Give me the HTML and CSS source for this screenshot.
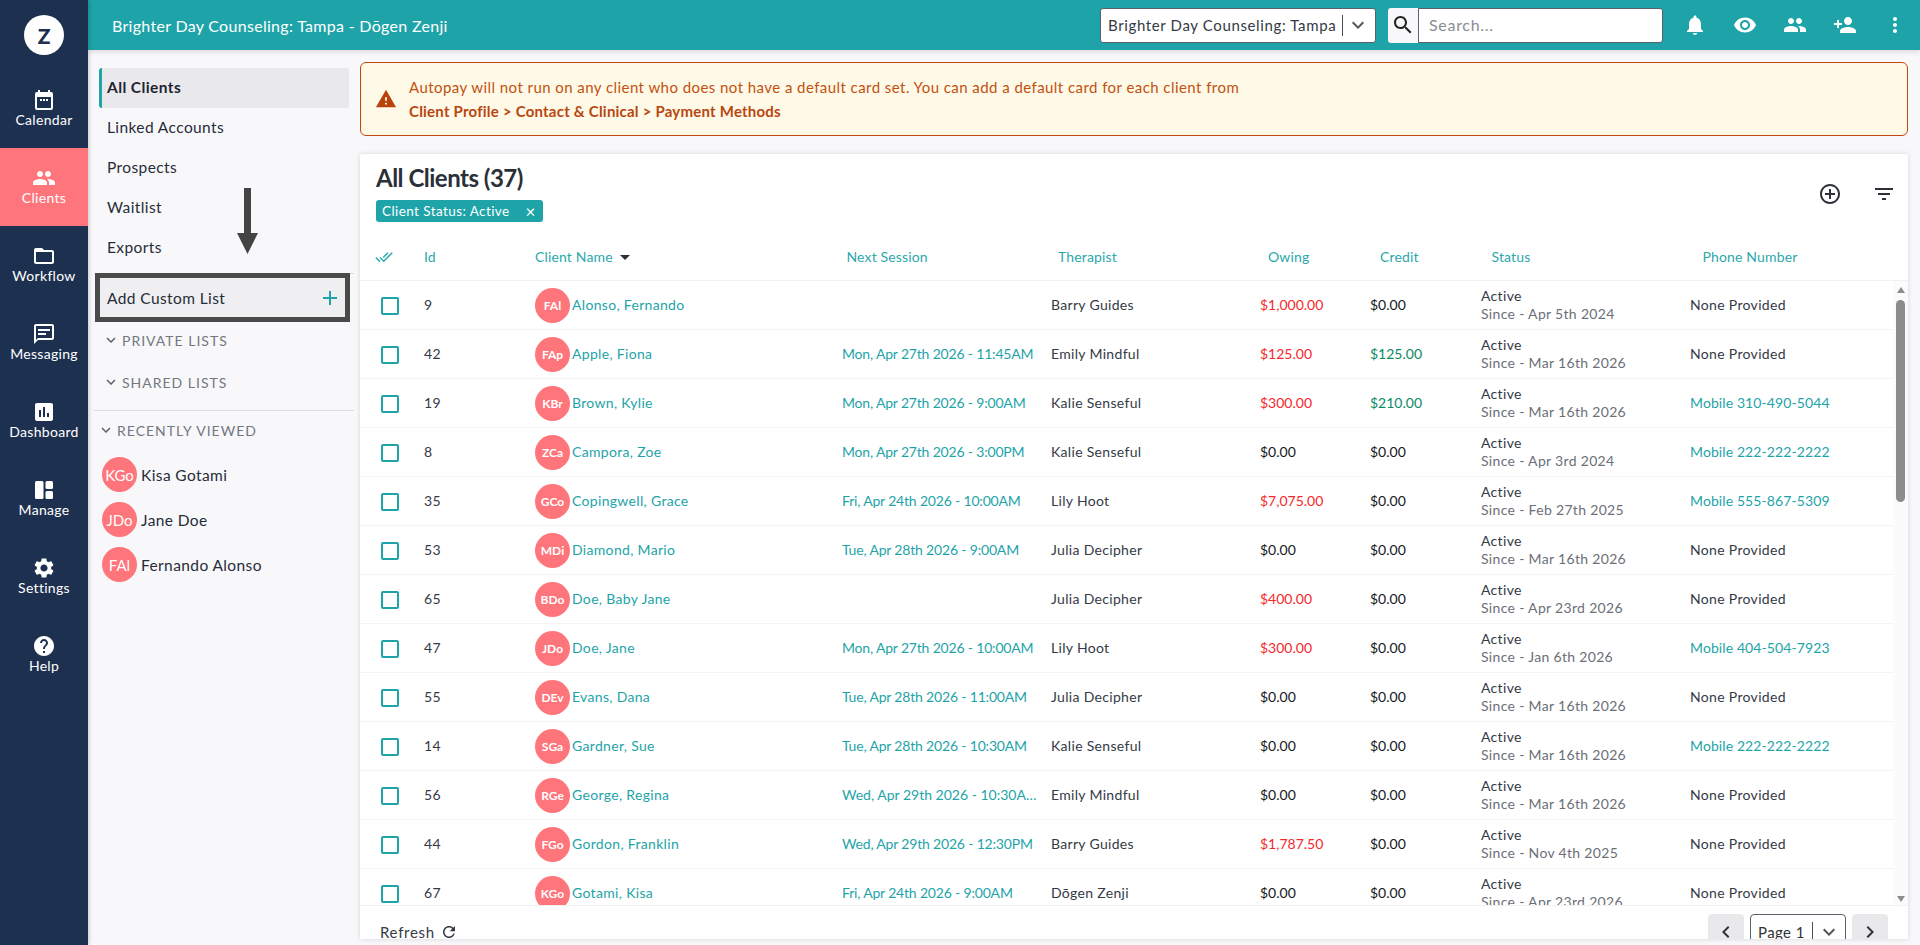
FILE: index.html
```html
<!DOCTYPE html>
<html lang="en">
<head>
<meta charset="utf-8">
<title>All Clients</title>
<link rel="stylesheet" href="styles.css">
</head>
<body>
<svg class="defs" aria-hidden="true">
  <symbol id="i-cal" viewBox="0 0 24 24"><path d="M19 4h-1V2h-2v2H8V2H6v2H5a2 2 0 0 0-2 2v14a2 2 0 0 0 2 2h14a2 2 0 0 0 2-2V6a2 2 0 0 0-2-2zm0 16H5V9h14v11z"/><path d="M8 11h2v2H8zM11 11h2v2h-2zM14 11h2v2h-2z"/></symbol>
  <symbol id="i-people" viewBox="0 0 24 24"><path d="M16 11c1.66 0 2.99-1.34 2.99-3S17.66 5 16 5c-1.66 0-3 1.34-3 3s1.34 3 3 3zm-8 0c1.66 0 2.99-1.34 2.99-3S9.66 5 8 5C6.34 5 5 6.34 5 8s1.34 3 3 3zm0 2c-2.33 0-7 1.17-7 3.5V19h14v-2.5c0-2.33-4.67-3.5-7-3.5zm8 0c-.29 0-.62.02-.97.05 1.16.84 1.97 1.97 1.97 3.45V19h6v-2.5c0-2.33-4.67-3.5-7-3.5z"/></symbol>
  <symbol id="i-folder" viewBox="0 0 24 24"><path d="M20 6h-8l-2-2H4c-1.1 0-1.99.9-1.99 2L2 18c0 1.1.9 2 2 2h16c1.1 0 2-.9 2-2V8c0-1.1-.9-2-2-2zm0 12H4V8h16v10z"/></symbol>
  <symbol id="i-msg" viewBox="0 0 24 24"><path d="M20 2H4c-1.1 0-2 .9-2 2v18l4-4h14c1.1 0 2-.9 2-2V4c0-1.1-.9-2-2-2zm0 14H6l-2 2V4h16v12z"/><path d="M6 9h12V7H6zm0 4h8v-2H6z"/></symbol>
  <symbol id="i-chart" viewBox="0 0 24 24"><path d="M19 3H5c-1.1 0-2 .9-2 2v14c0 1.1.9 2 2 2h14c1.1 0 2-.9 2-2V5c0-1.1-.9-2-2-2zM9 17H7v-7h2v7zm4 0h-2V7h2v10zm4 0h-2v-4h2v4z"/></symbol>
  <symbol id="i-manage" viewBox="0 0 24 24"><rect x="3" y="3" width="8.5" height="18" rx="1.5"/><rect x="13.5" y="3" width="7.5" height="8" rx="1.5"/><rect x="13.5" y="13" width="7.5" height="8" rx="1.5"/></symbol>
  <symbol id="i-gear" viewBox="0 0 24 24"><path d="M19.14 12.94c.04-.3.06-.61.06-.94 0-.32-.02-.64-.07-.94l2.03-1.58c.18-.14.23-.41.12-.61l-1.92-3.32c-.12-.22-.37-.29-.59-.22l-2.39.96c-.5-.38-1.03-.7-1.62-.94l-.36-2.54c-.04-.24-.24-.41-.48-.41h-3.84c-.24 0-.43.17-.47.41l-.36 2.54c-.59.24-1.13.57-1.62.94l-2.39-.96c-.22-.08-.47 0-.59.22L2.74 8.87c-.12.21-.08.47.12.61l2.03 1.58c-.05.3-.09.63-.09.94s.02.64.07.94l-2.03 1.58c-.18.14-.23.41-.12.61l1.92 3.32c.12.22.37.29.59.22l2.39-.96c.5.38 1.03.7 1.62.94l.36 2.54c.05.24.24.41.48.41h3.84c.24 0 .44-.17.47-.41l.36-2.54c.59-.24 1.13-.56 1.62-.94l2.39.96c.22.08.47 0 .59-.22l1.92-3.32c.12-.22.07-.47-.12-.61l-2.01-1.58zM12 15.6c-1.98 0-3.6-1.62-3.6-3.6s1.62-3.6 3.6-3.6 3.6 1.62 3.6 3.6-1.62 3.6-3.6 3.6z"/></symbol>
  <symbol id="i-help" viewBox="0 0 24 24"><path d="M12 2C6.48 2 2 6.48 2 12s4.48 10 10 10 10-4.48 10-10S17.52 2 12 2zm1 17h-2v-2h2v2zm2.07-7.75l-.9.92C13.45 12.9 13 13.5 13 15h-2v-.5c0-1.1.45-2.1 1.17-2.83l1.24-1.26c.37-.36.59-.86.59-1.41 0-1.1-.9-2-2-2s-2 .9-2 2H8c0-2.21 1.79-4 4-4s4 1.79 4 4c0 .88-.36 1.68-.93 2.25z"/></symbol>
  <symbol id="i-bell" viewBox="0 0 24 24"><path d="M12 22c1.1 0 2-.9 2-2h-4c0 1.1.9 2 2 2zm6-6v-5c0-3.07-1.63-5.64-4.5-6.32V4c0-.83-.67-1.5-1.5-1.5s-1.5.67-1.5 1.5v.68C7.64 5.36 6 7.92 6 11v5l-2 2v1h16v-1l-2-2z"/></symbol>
  <symbol id="i-eye" viewBox="0 0 24 24"><path d="M12 4.5C7 4.5 2.73 7.61 1 12c1.73 4.39 6 7.5 11 7.5s9.27-3.11 11-7.5c-1.73-4.39-6-7.5-11-7.5zM12 17c-2.76 0-5-2.24-5-5s2.24-5 5-5 5 2.24 5 5-2.24 5-5 5zm0-8c-1.66 0-3 1.34-3 3s1.34 3 3 3 3-1.34 3-3-1.34-3-3-3z"/></symbol>
  <symbol id="i-add-person" viewBox="0 0 24 24"><path d="M15 12c2.21 0 4-1.79 4-4s-1.79-4-4-4-4 1.79-4 4 1.79 4 4 4zm-9-2V7H4v3H1v2h3v3h2v-3h3v-2H6zm9 4c-2.67 0-8 1.34-8 4v2h16v-2c0-2.66-5.33-4-8-4z"/></symbol>
  <symbol id="i-dots" viewBox="0 0 24 24"><path d="M12 8c1.1 0 2-.9 2-2s-.9-2-2-2-2 .9-2 2 .9 2 2 2zm0 2c-1.1 0-2 .9-2 2s.9 2 2 2 2-.9 2-2-.9-2-2-2zm0 6c-1.1 0-2 .9-2 2s.9 2 2 2 2-.9 2-2-.9-2-2-2z"/></symbol>
  <symbol id="i-warn" viewBox="0 0 24 24"><path d="M1 21h22L12 2 1 21zm12-3h-2v-2h2v2zm0-4h-2v-4h2v4z"/></symbol>
  <symbol id="i-search" viewBox="0 0 24 24"><path d="M15.5 14h-.79l-.28-.27C15.41 12.59 16 11.11 16 9.5 16 5.91 13.09 3 9.5 3S3 5.91 3 9.5 5.91 16 9.5 16c1.61 0 3.09-.59 4.23-1.57l.27.28v.79l5 4.99L20.49 19l-4.99-5zm-6 0C7.01 14 5 11.99 5 9.5S7.01 5 9.5 5 14 7.01 14 9.5 11.99 14 9.5 14z"/></symbol>
  <symbol id="i-add-circle" viewBox="0 0 24 24"><path d="M13 7h-2v4H7v2h4v4h2v-4h4v-2h-4V7zm-1-5C6.48 2 2 6.48 2 12s4.48 10 10 10 10-4.48 10-10S17.52 2 12 2zm0 18c-4.41 0-8-3.59-8-8s3.59-8 8-8 8 3.59 8 8-3.59 8-8 8z"/></symbol>
  <symbol id="i-filter" viewBox="0 0 24 24"><path d="M10 18h4v-2h-4v2zM3 6v2h18V6H3zm3 7h12v-2H6v2z"/></symbol>
  <symbol id="i-refresh" viewBox="0 0 24 24"><path d="M17.65 6.35C16.2 4.9 14.21 4 12 4c-4.42 0-7.99 3.58-7.99 8s3.57 8 7.99 8c3.73 0 6.84-2.55 7.73-6h-2.08c-.82 2.33-3.04 4-5.65 4-3.31 0-6-2.69-6-6s2.69-6 6-6c1.66 0 3.14.69 4.22 1.78L13 11h7V4l-2.35 2.35z"/></symbol>
  <symbol id="i-down" viewBox="0 0 24 24"><path d="M7.41 8.59 12 13.17l4.59-4.58L18 10l-6 6-6-6z"/></symbol>
  <symbol id="i-left" viewBox="0 0 24 24"><path d="M15.41 7.41 14 6l-6 6 6 6 1.41-1.41L10.83 12z"/></symbol>
  <symbol id="i-right" viewBox="0 0 24 24"><path d="M10 6 8.59 7.41 13.17 12l-4.58 4.59L10 18l6-6z"/></symbol>
  <symbol id="i-done-all" viewBox="0 0 24 24"><path d="M18 7l-1.41-1.41-6.34 6.34 1.41 1.41L18 7zm4.24-1.41L11.66 16.17 7.48 12l-1.41 1.41L11.66 19l12-12-1.42-1.41zM.41 13.41 6 19l1.41-1.41L1.83 12 .41 13.41z"/></symbol>
</svg>

<div class="app">
  <nav class="side">
    <div class="logo"><span class="logo-mark">Z</span></div>
    <a class="nav-item"><svg class="ic"><use href="#i-cal"/></svg><span>Calendar</span></a>
    <a class="nav-item is-active"><svg class="ic"><use href="#i-people"/></svg><span>Clients</span></a>
    <a class="nav-item"><svg class="ic"><use href="#i-folder"/></svg><span>Workflow</span></a>
    <a class="nav-item"><svg class="ic"><use href="#i-msg"/></svg><span>Messaging</span></a>
    <a class="nav-item"><svg class="ic"><use href="#i-chart"/></svg><span>Dashboard</span></a>
    <a class="nav-item"><svg class="ic"><use href="#i-manage"/></svg><span>Manage</span></a>
    <a class="nav-item"><svg class="ic"><use href="#i-gear"/></svg><span>Settings</span></a>
    <a class="nav-item"><svg class="ic"><use href="#i-help"/></svg><span>Help</span></a>
  </nav>

  <div class="main">
    <header class="top">
      <div class="top-title">Brighter Day Counseling: Tampa - Dōgen Zenji</div>
      <div class="select">
        <span class="select-text">Brighter Day Counseling: Tampa</span>
        <span class="select-sep"></span>
        <svg class="ic select-chev"><use href="#i-down"/></svg>
      </div>
      <div class="search">
        <span class="search-btn"><svg class="ic"><use href="#i-search"/></svg></span>
        <span class="search-input">Search...</span>
      </div>
      <div class="top-icons">
        <svg class="ic"><use href="#i-bell"/></svg>
        <svg class="ic"><use href="#i-eye"/></svg>
        <svg class="ic"><use href="#i-people"/></svg>
        <svg class="ic"><use href="#i-add-person"/></svg>
        <svg class="ic"><use href="#i-dots"/></svg>
      </div>
    </header>

    <div class="content">
      <aside class="panel">
        <a class="panel-item is-current">All Clients</a>
        <a class="panel-item">Linked Accounts</a>
        <a class="panel-item">Prospects</a>
        <a class="panel-item">Waitlist</a>
        <a class="panel-item">Exports</a>
        <div class="add-wrap">
          <div class="add-box"><span>Add Custom List</span><span class="add-plus"></span></div>
        </div>
        <div class="section"><svg class="ic sec-chev"><use href="#i-down"/></svg>PRIVATE LISTS</div>
        <div class="section"><svg class="ic sec-chev"><use href="#i-down"/></svg>SHARED LISTS</div>
        <div class="section section-recent"><svg class="ic sec-chev"><use href="#i-down"/></svg>RECENTLY VIEWED</div>
        <div class="recent"><span class="avatar avatar-lg">KGo</span>Kisa Gotami</div>
        <div class="recent"><span class="avatar avatar-lg">JDo</span>Jane Doe</div>
        <div class="recent"><span class="avatar avatar-lg">FAl</span>Fernando Alonso</div>
        <svg class="callout" viewBox="0 0 21 66"><path d="M7 0h7v45h7L10.5 66 0 45h7z"/></svg>
      </aside>

      <section class="work">
        <div class="banner">
          <svg class="ic banner-ic"><use href="#i-warn"/></svg>
          <div class="banner-text">
            <p>Autopay will not run on any client who does not have a default card set. You can add a default card for each client from</p>
            <p class="banner-strong">Client Profile &gt; Contact &amp; Clinical &gt; Payment Methods</p>
          </div>
        </div>

        <div class="card">
          <div class="card-head">
            <div>
              <h1 class="card-title">All Clients (37)</h1>
              <span class="chip">Client Status: Active<span class="chip-x">×</span></span>
            </div>
            <div class="card-actions">
              <svg class="ic"><use href="#i-add-circle"/></svg>
              <svg class="ic"><use href="#i-filter"/></svg>
            </div>
          </div>

          <div class="col-head">
            <span><svg class="ic check-all"><use href="#i-done-all"/></svg></span>
            <span>Id</span>
            <span>Client Name<i class="caret"></i></span>
            <span>Next Session</span>
            <span>Therapist</span>
            <span>Owing</span>
            <span>Credit</span>
            <span>Status</span>
            <span>Phone Number</span>
          </div>

          <div class="table-body">
            <div class="rows">
              <div class="row"><span class="box"></span><span>9</span><span class="name"><span class="avatar">FAl</span><span class="link">Alonso, Fernando</span></span><span class="link date"></span><span>Barry Guides</span><span class="neg">$1,000.00</span><span class="amt">$0.00</span><span class="status"><b>Active</b><small>Since - Apr 5th 2024</small></span><span>None Provided</span></div>
              <div class="row"><span class="box"></span><span>42</span><span class="name"><span class="avatar">FAp</span><span class="link">Apple, Fiona</span></span><span class="link date">Mon, Apr 27th 2026 - 11:45AM</span><span>Emily Mindful</span><span class="neg">$125.00</span><span class="pos">$125.00</span><span class="status"><b>Active</b><small>Since - Mar 16th 2026</small></span><span>None Provided</span></div>
              <div class="row"><span class="box"></span><span>19</span><span class="name"><span class="avatar">KBr</span><span class="link">Brown, Kylie</span></span><span class="link date">Mon, Apr 27th 2026 - 9:00AM</span><span>Kalie Senseful</span><span class="neg">$300.00</span><span class="pos">$210.00</span><span class="status"><b>Active</b><small>Since - Mar 16th 2026</small></span><span class="link phone">Mobile 310-490-5044</span></div>
              <div class="row"><span class="box"></span><span>8</span><span class="name"><span class="avatar">ZCa</span><span class="link">Campora, Zoe</span></span><span class="link date">Mon, Apr 27th 2026 - 3:00PM</span><span>Kalie Senseful</span><span class="amt">$0.00</span><span class="amt">$0.00</span><span class="status"><b>Active</b><small>Since - Apr 3rd 2024</small></span><span class="link phone">Mobile 222-222-2222</span></div>
              <div class="row"><span class="box"></span><span>35</span><span class="name"><span class="avatar">GCo</span><span class="link">Copingwell, Grace</span></span><span class="link date">Fri, Apr 24th 2026 - 10:00AM</span><span>Lily Hoot</span><span class="neg">$7,075.00</span><span class="amt">$0.00</span><span class="status"><b>Active</b><small>Since - Feb 27th 2025</small></span><span class="link phone">Mobile 555-867-5309</span></div>
              <div class="row"><span class="box"></span><span>53</span><span class="name"><span class="avatar">MDi</span><span class="link">Diamond, Mario</span></span><span class="link date">Tue, Apr 28th 2026 - 9:00AM</span><span>Julia Decipher</span><span class="amt">$0.00</span><span class="amt">$0.00</span><span class="status"><b>Active</b><small>Since - Mar 16th 2026</small></span><span>None Provided</span></div>
              <div class="row"><span class="box"></span><span>65</span><span class="name"><span class="avatar">BDo</span><span class="link">Doe, Baby Jane</span></span><span class="link date"></span><span>Julia Decipher</span><span class="neg">$400.00</span><span class="amt">$0.00</span><span class="status"><b>Active</b><small>Since - Apr 23rd 2026</small></span><span>None Provided</span></div>
              <div class="row"><span class="box"></span><span>47</span><span class="name"><span class="avatar">JDo</span><span class="link">Doe, Jane</span></span><span class="link date">Mon, Apr 27th 2026 - 10:00AM</span><span>Lily Hoot</span><span class="neg">$300.00</span><span class="amt">$0.00</span><span class="status"><b>Active</b><small>Since - Jan 6th 2026</small></span><span class="link phone">Mobile 404-504-7923</span></div>
              <div class="row"><span class="box"></span><span>55</span><span class="name"><span class="avatar">DEv</span><span class="link">Evans, Dana</span></span><span class="link date">Tue, Apr 28th 2026 - 11:00AM</span><span>Julia Decipher</span><span class="amt">$0.00</span><span class="amt">$0.00</span><span class="status"><b>Active</b><small>Since - Mar 16th 2026</small></span><span>None Provided</span></div>
              <div class="row"><span class="box"></span><span>14</span><span class="name"><span class="avatar">SGa</span><span class="link">Gardner, Sue</span></span><span class="link date">Tue, Apr 28th 2026 - 10:30AM</span><span>Kalie Senseful</span><span class="amt">$0.00</span><span class="amt">$0.00</span><span class="status"><b>Active</b><small>Since - Mar 16th 2026</small></span><span class="link phone">Mobile 222-222-2222</span></div>
              <div class="row"><span class="box"></span><span>56</span><span class="name"><span class="avatar">RGe</span><span class="link">George, Regina</span></span><span class="link date date-cut">Wed, Apr 29th 2026 - 10:30AM</span><span>Emily Mindful</span><span class="amt">$0.00</span><span class="amt">$0.00</span><span class="status"><b>Active</b><small>Since - Mar 16th 2026</small></span><span>None Provided</span></div>
              <div class="row"><span class="box"></span><span>44</span><span class="name"><span class="avatar">FGo</span><span class="link">Gordon, Franklin</span></span><span class="link date">Wed, Apr 29th 2026 - 12:30PM</span><span>Barry Guides</span><span class="neg">$1,787.50</span><span class="amt">$0.00</span><span class="status"><b>Active</b><small>Since - Nov 4th 2025</small></span><span>None Provided</span></div>
              <div class="row"><span class="box"></span><span>67</span><span class="name"><span class="avatar">KGo</span><span class="link">Gotami, Kisa</span></span><span class="link date">Fri, Apr 24th 2026 - 9:00AM</span><span>Dōgen Zenji</span><span class="amt">$0.00</span><span class="amt">$0.00</span><span class="status"><b>Active</b><small>Since - Apr 23rd 2026</small></span><span>None Provided</span></div>
            </div>
            <div class="scrollbar">
              <span class="sb-btn sb-up"></span>
              <span class="sb-track"><span class="sb-thumb"></span></span>
              <span class="sb-btn sb-down"></span>
            </div>
          </div>

          <div class="card-foot">
            <span class="refresh">Refresh<svg class="ic"><use href="#i-refresh"/></svg></span>
            <div class="pager">
              <span class="page-btn"><svg class="ic"><use href="#i-left"/></svg></span>
              <span class="page-select"><span class="page-label">Page 1</span><span class="page-sep"></span><svg class="ic"><use href="#i-down"/></svg></span>
              <span class="page-btn"><svg class="ic"><use href="#i-right"/></svg></span>
            </div>
          </div>
        </div>
      </section>
    </div>
  </div>
</div>
</body>
</html>
```
FILE: styles.css
```css
* { box-sizing: border-box; }
html, body { margin: 0; height: 100%; overflow: hidden; }
body {
  font-family: Lato, "Noto Sans", sans-serif;
  font-size: 14px;
  color: #343a46;
  background: #f8f8fb;
}
.defs { display: none; }
.ic { width: 24px; height: 24px; fill: currentColor; flex: none; display: block; }
p { margin: 0; }

.app { display: flex; height: 100vh; }

/* nav rail */
.side {
  width: 88px; flex: none; background: #1e3050; color: #fff;
  box-shadow: 1px 0 4px rgba(0,0,0,.2); z-index: 3;
}
.logo { height: 70px; display: flex; align-items: center; justify-content: center; }
.logo-mark {
  width: 40px; height: 40px; border-radius: 50%; background: #fff; color: #1e3050;
  display: flex; align-items: center; justify-content: center;
  font-weight: 900; font-size: 21px;
}
.nav-item {
  height: 78px; padding-top: 18px; display: flex; flex-direction: column; align-items: center;
  letter-spacing: .3px; line-height: 16px;
}
.nav-item.is-active { background: #ff757c; }

.main { flex: 1; min-width: 0; display: flex; flex-direction: column; }

/* top bar */
.top {
  height: 50px; flex: none; background: #1ea4a8; color: #fff;
  display: flex; align-items: center; padding: 0 13px 0 24px;
  box-shadow: 0 2px 5px rgba(0,0,0,.12); z-index: 2;
}
.top-title { flex: 1; font-size: 16px; letter-spacing: .3px; }
.select {
  width: 276px; height: 35px; background: #fff; color: #343a46; border: 1px solid #59616b; border-radius: 3px;
  display: flex; align-items: center; padding-left: 7px; font-size: 15px; letter-spacing: .63px;
}
.select-text { width: 234px; white-space: nowrap; }
.select-sep { width: 1px; height: 21px; background: #4a4f57; }
.select-chev { color: #555; margin-left: 3px; width: 24px; }
.search { display: flex; height: 35px; margin-left: 12px; }
.search-btn {
  width: 30px; background: #f8f8fb; color: #222; border-radius: 3px 0 0 3px;
  display: flex; align-items: center; justify-content: center;
}
.search-input {
  width: 245px; background: #fff; color: #8a8d92; border: 1px solid #59616b; border-radius: 0 3px 3px 0;
  padding-left: 10px; line-height: 31px; font-size: 16px; letter-spacing: .7px;
}
.top-icons { display: flex; gap: 26px; margin-left: 20px; }

.content { flex: 1; min-height: 0; display: flex; }

/* list panel */
.panel { position: relative; width: 272px; flex: none; padding: 18px 0 0 11px; letter-spacing: .4px; font-size: 15.5px; color: #262c38; }
.panel-item { display: flex; align-items: center; height: 40px; width: 250px; padding: 0 0 2px 8px; }
.panel-item.is-current {
  background: #e9e9ed; border-left: 3px solid #1ea4a8; border-radius: 3px; padding-left: 5px; font-weight: 700; color: #1f2530;
}
.add-wrap { margin: 5px 0 0 -5px; width: 260px; border-top: 1px solid #dcdce2; }
.add-box {
  margin: -1px 0 0 1px; width: 255px; height: 49px; background: #efeff1; border: 5px solid #4a4a4a;
  display: flex; align-items: center; justify-content: space-between; padding: 0 8px 0 7px;
}
.add-plus {
  width: 14px; height: 14px;
  background: linear-gradient(#1ea4a8,#1ea4a8) center/100% 2px no-repeat, linear-gradient(#1ea4a8,#1ea4a8) center/2px 100% no-repeat;
}
.section {
  display: flex; align-items: center; height: 42px; padding: 0 0 2px 3px;
  font-size: 14px; letter-spacing: 1px; color: #73777f; gap: 2px;
}
.add-wrap + .section { margin-top: -2px; }
.sec-chev { width: 18px; height: 18px; color: #5c6068; }
.section-recent {
  margin: 6px 0 1px -5px; width: 260px; height: 41px; border-top: 1px solid #dcdce2;
}
.recent { display: flex; align-items: center; height: 45px; gap: 4px; padding-left: 3px; font-size: 15.5px; }
.avatar {
  width: 35px; height: 35px; border-radius: 50%; background: #ff757c; color: #fff; flex: none;
  display: flex; align-items: center; justify-content: center;
  font-size: 12px; font-weight: 700; letter-spacing: 0;
}
.avatar-lg { font-size: 15px; font-weight: 400; }
.callout { position: absolute; left: 149px; top: 138px; width: 21px; height: 66px; fill: #444; }

/* work area */
.work { flex: 1; min-width: 0; display: flex; flex-direction: column; gap: 18px; padding: 12px 12px 6px 0; }
.banner {
  height: 74px; flex: none; background: #fff9e8; border: 1px solid #c2470f; border-radius: 6px; color: #c2510f;
  display: flex; align-items: center; padding-left: 14px; gap: 12px; font-size: 15px; letter-spacing: .44px;
}
.banner-ic { width: 22px; height: 22px; color: #b8430c; }
.banner-text p { line-height: 24px; }
.banner-strong { font-weight: 700; letter-spacing: .22px; color: #b8470f; }

.card { flex: 1; min-height: 0; background: #fff; box-shadow: 0 0 5px rgba(0,0,0,.14); border-radius: 2px 2px 0 0; display: flex; flex-direction: column; overflow: hidden; }
.card-head { height: 71px; flex: none; display: flex; justify-content: space-between; padding: 9px 12px 0 16px; }
.card-title { margin: 0; font-size: 24px; line-height: 30px; font-weight: 700; color: #2b2f38; letter-spacing: -.5px; }
.chip {
  display: inline-flex; align-items: center; height: 22px; margin-top: 7px; padding: 0 7px 0 6px; gap: 16px;
  background: #1ea4a8; color: #fff; border-radius: 3px; font-size: 13.5px; letter-spacing: .42px;
}
.chip-x { font-size: 17px; line-height: 1; }
.card-actions { display: flex; gap: 30px; padding-top: 19px; color: #2e3138; }

.col-head, .row { display: grid; align-items: center; }
.col-head {
  grid-template-columns: 64px 111px 311.5px 211.5px 210px 112px 111.5px 211px 1fr;
  height: 56px; flex: none; padding-top: 8px; border-bottom: 1px solid #f1f1f4; color: #2ba8ac; letter-spacing: .15px;
}
.check-all { width: 18px; height: 18px; margin-left: 15px; color: #2ba8ac; }
.caret { display: inline-block; margin-left: 7px; vertical-align: 2px; border: 5px solid transparent; border-top-color: #2b2f38; border-bottom: 0; }

.table-body { flex: 1; min-height: 0; display: flex; }
.rows { flex: 1; min-width: 0; overflow: hidden; }
.row {
  grid-template-columns: 64px 111px 307px 209px 209px 110px 111px 209px 1fr;
  height: 49px; border-bottom: 1px solid #f4f4f6; letter-spacing: .32px; white-space: nowrap; overflow: hidden;
}
.row > span { padding-bottom: 2px; }
.row > .box { padding: 0; width: 18px; height: 18px; margin: 2px 0 0 21px; border: 2px solid #1ea4a8; border-radius: 2px; }
.row > .name { display: flex; align-items: center; gap: 2px; height: 35px; padding: 0; }
.name .link { padding-bottom: 2px; }
.link { color: #1ea4a8; }
.date { letter-spacing: -.18px; padding-right: 12px; overflow: hidden; text-overflow: ellipsis; }
.date-cut { letter-spacing: 0; padding-right: 14px; }
.phone { letter-spacing: .1px; }
.neg { color: #f5282c; letter-spacing: 0; }
.pos { color: #0b8a62; letter-spacing: 0; }
.amt { color: #15181d; letter-spacing: 0; }
.row > .status { line-height: 18px; padding: 0; }
.status b { display: block; font-weight: 400; }
.status small { display: block; font-size: 14px; color: #6b6f78; }

.scrollbar { width: 15px; flex: none; display: flex; flex-direction: column; background: #fbfbfb; }
.sb-btn { height: 15px; flex: none; display: flex; justify-content: center; }
.sb-up { padding-top: 6px; }
.sb-up::before { content: ""; height: 0; border: 4.5px solid transparent; border-top: 0; border-bottom: 6px solid #8c8c8c; }
.sb-down { padding-top: 6px; }
.sb-down::before { content: ""; height: 0; border: 4.5px solid transparent; border-bottom: 0; border-top: 6px solid #8c8c8c; }
.sb-track { flex: 1; padding: 4px 3px 0; }
.sb-thumb { display: block; height: 202px; background: #8c8c8c; border-radius: 5px; }

.card-foot { height: 34px; flex: none; display: flex; justify-content: space-between; padding: 8px 20px 0 20px; border-top: 1px solid #f1f1f4; }
.refresh { display: flex; align-items: center; gap: 5px; height: 36px; font-size: 15px; letter-spacing: .7px; }
.refresh .ic { width: 18px; height: 18px; }
.pager { display: flex; gap: 6px; }
.page-btn { width: 36px; height: 36px; background: #e9e9eb; border-radius: 4px; display: flex; align-items: center; justify-content: center; color: #333; }
.page-select { width: 96px; height: 36px; border: 1px solid #59616b; border-radius: 4px; display: flex; align-items: center; padding-left: 7px; font-size: 15px; letter-spacing: .4px; color: #333; }
.page-label { width: 54px; white-space: nowrap; }
.page-sep { width: 1px; height: 21px; background: #4a4f57; }
.page-select .ic { color: #555; margin-left: 4px; }
```
